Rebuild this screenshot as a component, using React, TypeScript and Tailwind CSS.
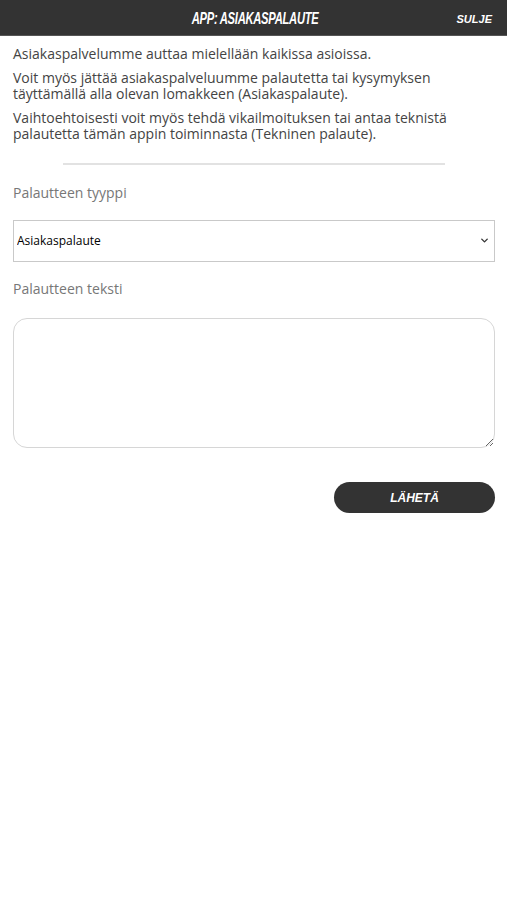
import { ChevronDown } from "lucide-react";

const body = { fontFamily: '"Open Sans", "Liberation Sans", sans-serif' };
const arial = { fontFamily: '"Liberation Sans", Arial, sans-serif' };

function Header() {
    return (
        <header className="relative flex h-[36px] items-center justify-center border-b border-[#555] bg-[#333333]">
            <h1 className="mt-[3px] ml-[3px] origin-center scale-x-[0.66] text-[17px] font-bold italic uppercase tracking-tight text-white" style={arial}>
                App: Asiakaspalaute
            </h1>
            <button className="absolute right-[15px] top-[11px] text-[11px] font-bold italic text-white" style={arial}>
                SULJE
            </button>
        </header>
    );
}

export default function App() {
    return (
        <div className="min-h-[900px] bg-white" style={body}>
            <Header />
            <main className="pl-[13px] pr-[12px]">
                <div className="mt-[10px] flex flex-col gap-[8px] text-[14px] leading-[16px] text-[#444]">
                    <p>Asiakaspalvelumme auttaa mielellään kaikissa asioissa.</p>
                    <p>
                        Voit myös jättää asiakaspalveluumme palautetta tai kysymyksen
                        <br />
                        täyttämällä alla olevan lomakkeen (Asiakaspalaute).
                    </p>
                    <p>
                        Vaihtoehtoisesti voit myös tehdä vikailmoituksen tai antaa teknistä
                        <br />
                        palautetta tämän appin toiminnasta (Tekninen palaute).
                    </p>
                </div>

                <hr className="mx-auto mt-[21px] w-[382px] border-t-2 border-[#e2e2e2]" />

                <label className="mt-[17px] block text-[14px] text-[#777]">Palautteen tyyppi</label>
                <div className="relative mt-[17px]">
                    <select
                        className="h-[42px] w-full appearance-none border border-[#c9c9c9] bg-white pl-[3px] text-[12px] text-black outline-none"
                        style={body}
                        defaultValue="asiakas"
                    >
                        <option value="asiakas">Asiakaspalaute</option>
                        <option value="tekninen">Tekninen palaute</option>
                    </select>
                    <ChevronDown className="pointer-events-none absolute right-[5px] top-[15px] h-[11px] w-[11px] text-[#333]" strokeWidth={3} />
                </div>

                <label className="mt-[16px] block text-[14px] text-[#777]">Palautteen teksti</label>
                <textarea className="mt-[19px] block h-[130px] w-full rounded-[14px] border border-[#d6d6d6] p-2 text-[13px] outline-none" />

                <div className="mt-[34px] flex justify-end">
                    <button className="h-[31px] w-[161px] rounded-full bg-[#333333] text-[12px] font-bold italic text-white" style={arial}>
                        LÄHETÄ
                    </button>
                </div>
            </main>
        </div>
    );
}
